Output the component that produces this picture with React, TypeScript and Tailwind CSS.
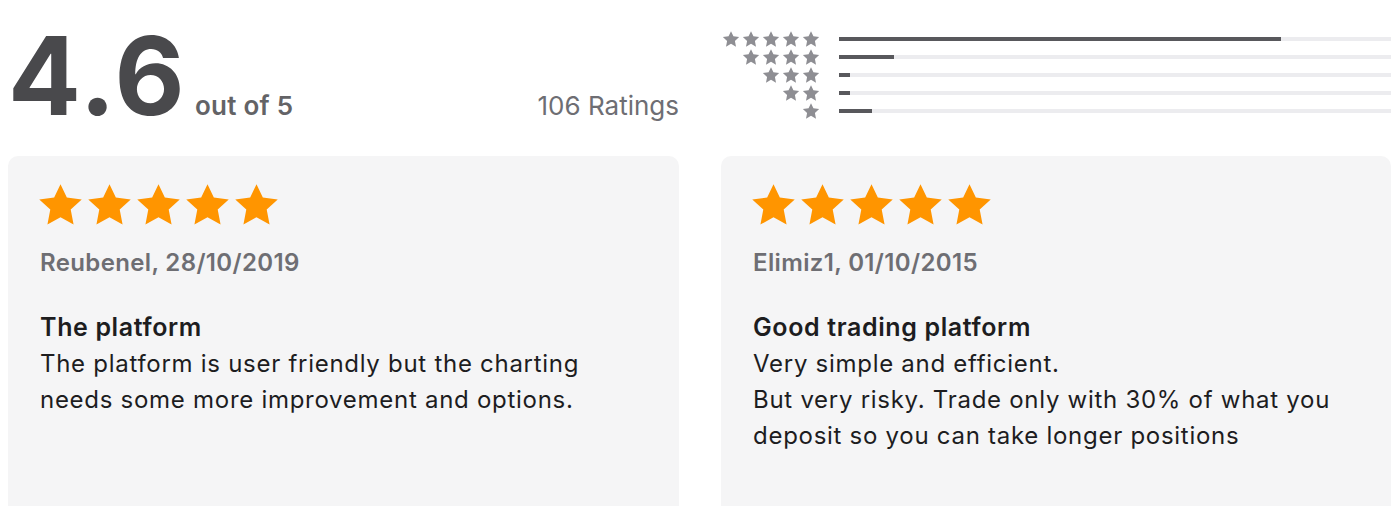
const FONT = { fontFamily: 'Inter, "Liberation Sans", sans-serif' };

const STAR = '12,1.6 15.1,8.1 22.4,9 17,14 18.4,21.3 12,17.7 5.6,21.3 7,14 1.6,9 8.9,8.1';

function Star({ className }: { className: string }) {
  return (
    <svg viewBox="0 0 24 23" className={className} fill="currentColor">
      <polygon points={STAR} />
    </svg>
  );
}

const histogram = [
  { stars: 5, pct: 80 },
  { stars: 4, pct: 10 },
  { stars: 3, pct: 2 },
  { stars: 2, pct: 2 },
  { stars: 1, pct: 6 },
];

const reviews = [
  {
    author: 'Reubenel, 28/10/2019',
    title: 'The platform',
    lines: ['The platform is user friendly but the charting needs some more improvement and options.'],
  },
  {
    author: 'Elimiz1, 01/10/2015',
    title: 'Good trading platform',
    lines: ['Very simple and efficient.', 'But very risky. Trade only with 30% of what you deposit so you can take longer positions'],
  },
];

export default function App() {
  return (
    <div className="h-[506px] w-[1396px] overflow-hidden bg-white pl-[8px] pr-[5px]" style={FONT}>
      <div className="grid h-[156px] grid-cols-[671px_670px] gap-x-[42px]">
        <div className="flex items-end pb-[26px]">
          <div className="flex w-full items-baseline justify-between">
            <div className="flex items-baseline">
              <span className="text-[108px] leading-none font-bold tracking-[0.02em] text-[#49494c]">4.6</span>
              <span className="ml-[8px] text-[26px] font-semibold tracking-[0.01em] text-[#636366]">out of 5</span>
            </div>
            <span className="text-[26px] leading-none text-[#6e6e73]">106 Ratings</span>
          </div>
        </div>
        <div className="flex flex-col gap-[2px] pt-[31px]">
          {histogram.map((row) => (
            <div key={row.stars} className="flex h-[16px] items-center">
              <div className="flex w-[100px] justify-end">
                {Array.from({ length: row.stars }).map((_, i) => (
                  <Star key={i} className="h-[18px] w-[20px] text-[#8e8e93]" />
                ))}
              </div>
              <div className="ml-[18px] h-[4px] flex-1 bg-[#ececef]">
                <div className="h-full bg-[#58585c]" style={{ width: `${row.pct}%` }} />
              </div>
            </div>
          ))}
        </div>
      </div>
      <div className="grid grid-cols-[671px_670px] gap-x-[42px]">
        {reviews.map((r) => (
          <div key={r.author} className="h-[380px] rounded-[10px] bg-[#f5f5f6] px-[31px] pt-[24px]">
            <div className="-ml-[3px] flex">
              {Array.from({ length: 5 }).map((_, i) => (
                <Star key={i} className="h-[49px] w-[49px] text-[#ff9500]" />
              ))}
            </div>
            <div className="mt-[19px] pl-px text-[24px] leading-[30px] font-semibold tracking-[0.015em] text-[#6e6e73]">{r.author}</div>
            <div className="mt-[31px] pl-px text-[25px] leading-[36px] font-semibold tracking-[0.025em] text-[#1d1d1f]">{r.title}</div>
            <div className="mt-px">
              {r.lines.map((l) => (
                <p key={l} className="max-w-[600px] pl-px text-[24px] leading-[36px] tracking-[0.03em] text-[#1d1d1f]">{l}</p>
              ))}
            </div>
          </div>
        ))}
      </div>
    </div>
  );
}
